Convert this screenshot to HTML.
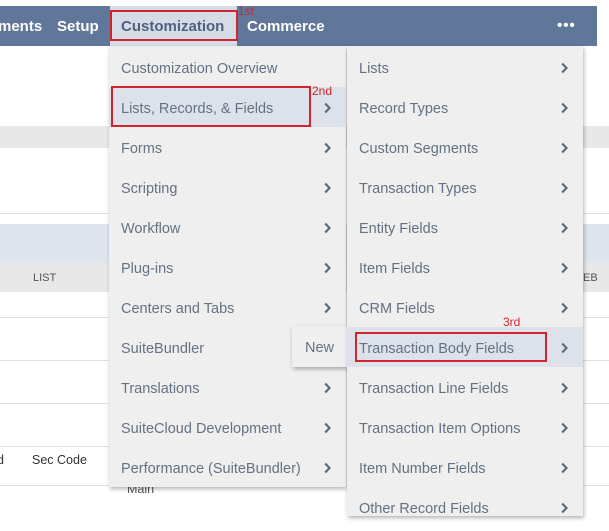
<!DOCTYPE html>
<html><head><meta charset="utf-8"><style>
*{margin:0;padding:0;box-sizing:border-box}
body{width:609px;height:512px;background:#fff;position:relative;overflow:hidden;font-family:"Liberation Sans",sans-serif}
.a{position:absolute}
.nav{left:0;top:6px;width:597px;height:40px;background:#607799}
.nt{color:#fff;font-weight:bold;font-size:15px;top:18px}
.menu{background:#efefef;box-shadow:1px 2px 4px rgba(0,0,0,.3)}
.it{position:absolute;left:0;width:100%;height:40px;line-height:44px;padding-left:12px;color:#637284;font-size:14.5px}
.it.h{background:#dde2ea}
.ch{position:absolute;right:15px;top:15px;width:7px;height:12px}
.red{border:2px solid #d2232f}
.rl{color:#d2232f;font-size:12px}
.line{left:0;height:1px;background:#e2e2e2;width:609px}
</style></head><body>
<svg width="0" height="0" style="position:absolute"><defs><symbol id="c" viewBox="0 0 7 12"><path d="M1.2 1.5 L5.5 6 L1.2 10.5" fill="none" stroke="#5c6a7c" stroke-width="2.2"/></symbol></defs></svg>
<div class="a nav"></div>
<div class="a nt" style="left:-2px">ments</div>
<div class="a nt" style="left:57px">Setup</div>
<div class="a" style="left:110px;top:6px;width:127px;height:40px;background:#d6dce6"></div>
<div class="a nt" style="left:121px;color:#4f6180">Customization</div>
<div class="a nt" style="left:247px">Commerce</div>
<div class="a nt" style="left:557px;top:17px;letter-spacing:1px">•••</div>
<div class="a red" style="left:110px;top:10px;width:128px;height:31px"></div>
<div class="a rl" style="left:238px;top:4px">1st</div>

<div class="a" style="left:0;top:126px;width:609px;height:22px;background:#e8e8e8"></div>
<div class="a line" style="top:213px"></div>
<div class="a" style="left:0;top:224px;width:609px;height:39px;background:#dfe5ee"></div>
<div class="a" style="left:0;top:263px;width:609px;height:29px;background:#e8e8e8"></div>
<div class="a" style="left:33px;top:272px;font-size:11px;color:#555">LIST</div>
<div class="a" style="left:583px;top:272px;font-size:11px;color:#555">EB</div>
<div class="a line" style="top:317px"></div>
<div class="a line" style="top:360px"></div>
<div class="a line" style="top:403px"></div>
<div class="a line" style="top:446px"></div>
<div class="a line" style="top:485px"></div>
<div class="a" style="left:32px;top:453px;font-size:12.5px;color:#333">Sec Code</div>
<div class="a" style="left:-3px;top:453px;font-size:12.5px;color:#333">d</div>
<div class="a" style="left:127px;top:482px;font-size:12.5px;color:#555">Main</div>

<div class="a menu" style="left:109px;top:46px;width:237px;height:441px">
<div class="it" style="top:1px">Customization Overview</div>
<div class="it h" style="top:41px">Lists, Records, &amp; Fields<svg class="ch"><use href="#c"/></svg></div>
<div class="it" style="top:81px">Forms<svg class="ch"><use href="#c"/></svg></div>
<div class="it" style="top:121px">Scripting<svg class="ch"><use href="#c"/></svg></div>
<div class="it" style="top:161px">Workflow<svg class="ch"><use href="#c"/></svg></div>
<div class="it" style="top:201px">Plug-ins<svg class="ch"><use href="#c"/></svg></div>
<div class="it" style="top:241px">Centers and Tabs<svg class="ch"><use href="#c"/></svg></div>
<div class="it" style="top:281px">SuiteBundler</div>
<div class="it" style="top:321px">Translations<svg class="ch"><use href="#c"/></svg></div>
<div class="it" style="top:361px">SuiteCloud Development<svg class="ch"><use href="#c"/></svg></div>
<div class="it" style="top:401px">Performance (SuiteBundler)<svg class="ch"><use href="#c"/></svg></div>
</div>
<div class="a red" style="left:111px;top:86px;width:200px;height:41px"></div>
<div class="a rl" style="left:312px;top:84px">2nd</div>
<div class="a menu" style="left:292px;top:326px;width:55px;height:41px;line-height:44px;text-align:center;color:#637284;font-size:14.5px">New</div>

<div class="a menu" style="left:347px;top:46px;width:236px;height:470px">
<div class="it" style="top:1px">Lists<svg class="ch"><use href="#c"/></svg></div>
<div class="it" style="top:41px">Record Types<svg class="ch"><use href="#c"/></svg></div>
<div class="it" style="top:81px">Custom Segments<svg class="ch"><use href="#c"/></svg></div>
<div class="it" style="top:121px">Transaction Types<svg class="ch"><use href="#c"/></svg></div>
<div class="it" style="top:161px">Entity Fields<svg class="ch"><use href="#c"/></svg></div>
<div class="it" style="top:201px">Item Fields<svg class="ch"><use href="#c"/></svg></div>
<div class="it" style="top:241px">CRM Fields<svg class="ch"><use href="#c"/></svg></div>
<div class="it h" style="top:281px">Transaction Body Fields<svg class="ch"><use href="#c"/></svg></div>
<div class="it" style="top:321px">Transaction Line Fields<svg class="ch"><use href="#c"/></svg></div>
<div class="it" style="top:361px">Transaction Item Options<svg class="ch"><use href="#c"/></svg></div>
<div class="it" style="top:401px">Item Number Fields<svg class="ch"><use href="#c"/></svg></div>
<div class="it" style="top:441px">Other Record Fields<svg class="ch"><use href="#c"/></svg></div>
</div>
<div class="a red" style="left:355px;top:332px;width:192px;height:30px"></div>
<div class="a rl" style="left:503px;top:315px">3rd</div>
</body></html>
